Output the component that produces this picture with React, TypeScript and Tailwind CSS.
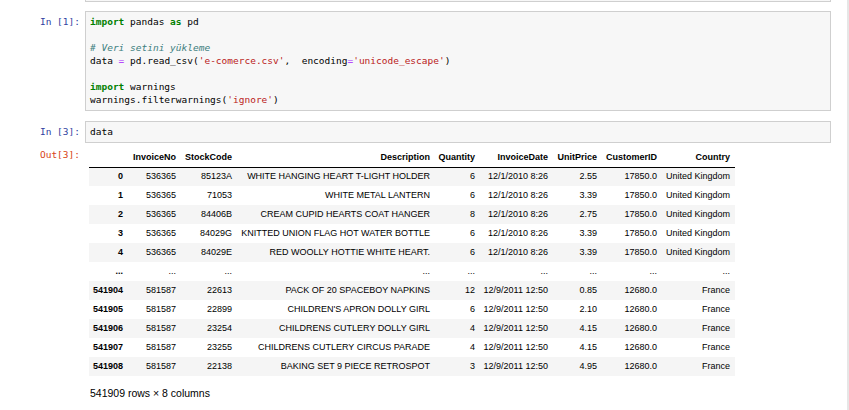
import React from "react";

type Row = {
  idx: string;
  invoice: string;
  stock: string;
  desc: string;
  qty: string;
  date: string;
  price: string;
  customer: string;
  country: string;
};

const columns = ["", "InvoiceNo", "StockCode", "Description", "Quantity", "InvoiceDate", "UnitPrice", "CustomerID", "Country"];
const widths = ["w-[39px]", "w-[53px]", "w-[56px]", "w-[198px]", "w-[45px]", "w-[73px]", "w-[49px]", "w-[60px]", "w-[73px]"];

const rows: Row[] = [
  {idx: "0", invoice: "536365", stock: "85123A", desc: "WHITE HANGING HEART T-LIGHT HOLDER", qty: "6", date: "12/1/2010 8:26", price: "2.55", customer: "17850.0", country: "United Kingdom"},
  {idx: "1", invoice: "536365", stock: "71053", desc: "WHITE METAL LANTERN", qty: "6", date: "12/1/2010 8:26", price: "3.39", customer: "17850.0", country: "United Kingdom"},
  {idx: "2", invoice: "536365", stock: "84406B", desc: "CREAM CUPID HEARTS COAT HANGER", qty: "8", date: "12/1/2010 8:26", price: "2.75", customer: "17850.0", country: "United Kingdom"},
  {idx: "3", invoice: "536365", stock: "84029G", desc: "KNITTED UNION FLAG HOT WATER BOTTLE", qty: "6", date: "12/1/2010 8:26", price: "3.39", customer: "17850.0", country: "United Kingdom"},
  {idx: "4", invoice: "536365", stock: "84029E", desc: "RED WOOLLY HOTTIE WHITE HEART.", qty: "6", date: "12/1/2010 8:26", price: "3.39", customer: "17850.0", country: "United Kingdom"},
  {idx: "...", invoice: "...", stock: "...", desc: "...", qty: "...", date: "...", price: "...", customer: "...", country: "..."},
  {idx: "541904", invoice: "581587", stock: "22613", desc: "PACK OF 20 SPACEBOY NAPKINS", qty: "12", date: "12/9/2011 12:50", price: "0.85", customer: "12680.0", country: "France"},
  {idx: "541905", invoice: "581587", stock: "22899", desc: "CHILDREN'S APRON DOLLY GIRL", qty: "6", date: "12/9/2011 12:50", price: "2.10", customer: "12680.0", country: "France"},
  {idx: "541906", invoice: "581587", stock: "23254", desc: "CHILDRENS CUTLERY DOLLY GIRL", qty: "4", date: "12/9/2011 12:50", price: "4.15", customer: "12680.0", country: "France"},
  {idx: "541907", invoice: "581587", stock: "23255", desc: "CHILDRENS CUTLERY CIRCUS PARADE", qty: "4", date: "12/9/2011 12:50", price: "4.15", customer: "12680.0", country: "France"},
  {idx: "541908", invoice: "581587", stock: "22138", desc: "BAKING SET 9 PIECE RETROSPOT", qty: "3", date: "12/9/2011 12:50", price: "4.95", customer: "12680.0", country: "France"},
];

const mono = "font-['DejaVu_Sans_Mono',monospace] text-[9.5px]";

const Kw = ({children}: {children: React.ReactNode}) => <span className="text-[#008000] font-bold">{children}</span>;
const Str = ({children}: {children: React.ReactNode}) => <span className="text-[#BA2121]">{children}</span>;
const Op = ({children}: {children: React.ReactNode}) => <span className="text-[#AA22FF]">{children}</span>;

const Prompt = ({label, out}: {label: string, out?: boolean}) =>
  <div className={`w-[85px] shrink-0 pr-[5px] text-right leading-[13px] ${mono} ${out ? "text-[#D84315]" : "text-[#303F9F]"}`}>
    {label}
  </div>;

const CodeCell = ({label, children}: {label: string, children: React.ReactNode}) =>
  <div className="flex">
    <div className="pt-[4px]">
      <Prompt label={label}/>
    </div>
    <div className={`w-[746px] border border-[#cfcfcf] bg-[#f7f7f7] pl-[4px] pt-[3px] pb-[4px] text-black leading-[13px] whitespace-pre ${mono}`}>
      {children}
    </div>
  </div>;

export default function App() {
  return <div className="flex w-[849px] h-[410px] bg-white overflow-hidden">
    <div className="w-[847px]">
      <div className="ml-[85px] w-[746px] h-[2px] border-x border-b border-[#cfcfcf] bg-[#f7f7f7]"/>

      <div className="mt-[9px]">
        <CodeCell label="In [1]:">
          <div><Kw>import</Kw> pandas <Kw>as</Kw> pd</div>
          <div>{" "}</div>
          <div className="italic text-[#408080]"># Veri setini yükleme</div>
          <div>data <Op>=</Op> pd.read_csv(<Str>'e-comerce.csv'</Str>,  encoding<Op>=</Op><Str>'unicode_escape'</Str>)</div>
          <div>{" "}</div>
          <div><Kw>import</Kw> warnings</div>
          <div>warnings.filterwarnings(<Str>'ignore'</Str>)</div>
        </CodeCell>
      </div>

      <div className="mt-[10px]">
        <CodeCell label="In [3]:">
          <div>data</div>
        </CodeCell>
      </div>

      <div className="flex mt-[5px]">
        <Prompt label="Out[3]:" out/>
        <div className="pl-[4px] font-['Liberation_Sans',Arial,sans-serif] text-black">
          <table className="table-fixed border-collapse w-[646px] text-[9px]">
            <colgroup>
              {widths.map((w, i) => <col key={i} className={w}/>)}
            </colgroup>
            <thead>
              <tr className="h-[19px] border-b border-black">
                {columns.map((c, i) =>
                  <th key={i} className="text-right font-bold pr-[5px] pl-0 whitespace-nowrap">{c}</th>
                )}
              </tr>
            </thead>
            <tbody>
              {rows.map((r, i) =>
                <tr key={i} className={`h-[19px] ${i % 2 === 0 ? "bg-[#f5f5f5]" : ""}`}>
                  <th className="text-right font-bold pr-[5px] whitespace-nowrap">{r.idx}</th>
                  {[r.invoice, r.stock, r.desc, r.qty, r.date, r.price, r.customer, r.country].map((v, j) =>
                    <td key={j} className="text-right pr-[5px] whitespace-nowrap">{v}</td>
                  )}
                </tr>
              )}
            </tbody>
          </table>
          <div className="mt-[11px] text-[10.5px] leading-[13px] pl-[1px]">541909 rows × 8 columns</div>
        </div>
      </div>
    </div>
    <div className="w-[2px] h-full bg-[#e6e6e6]"/>
  </div>;
}
